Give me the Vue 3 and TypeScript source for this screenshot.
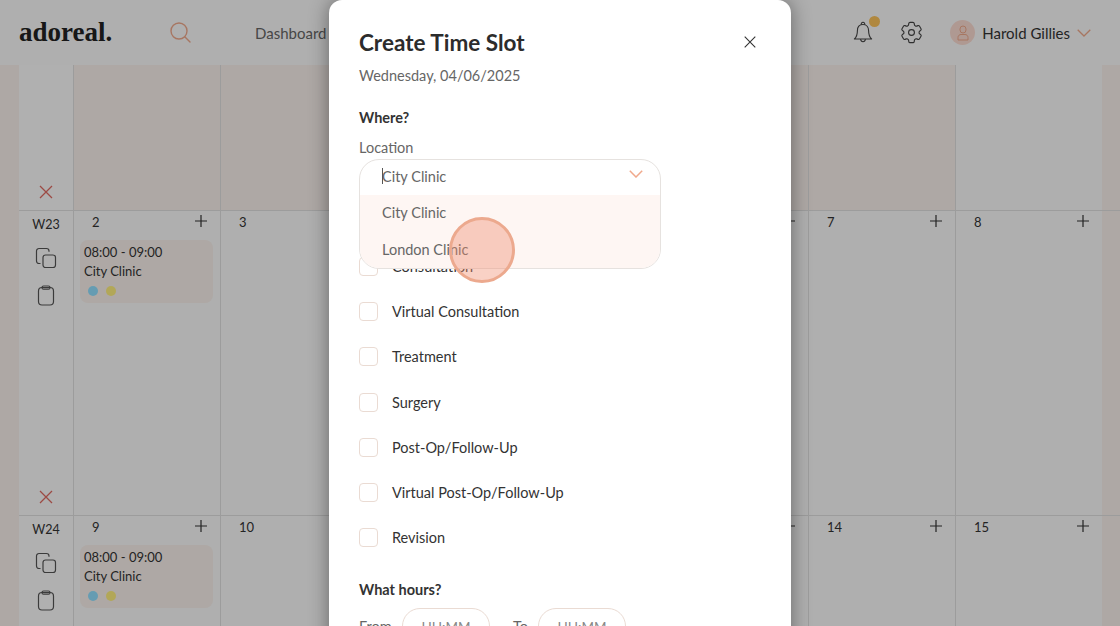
<script setup lang="ts">
const weeks = [
  { label: 'W22', days: [] as number[] },
  { label: 'W23', days: [2, 3, 4, 5, 6, 7, 8] },
  { label: 'W24', days: [9, 10, 11, 12, 13, 14, 15] },
]

// first row belongs to the previous month mostly, only the last day is active
const mutedTopRow = [true, true, true, true, true, true, false]

const slotTypes = [
  'Consultation',
  'Virtual Consultation',
  'Treatment',
  'Surgery',
  'Post-Op/Follow-Up',
  'Virtual Post-Op/Follow-Up',
  'Revision',
]
</script>

<template>
  <div class="page">
    <header class="topbar">
      <div class="logo">adoreal.</div>
      <svg class="search" width="24" height="24" viewBox="0 0 24 24" fill="none" stroke="#f0a98c" stroke-width="1.4">
        <circle cx="11" cy="11" r="8" />
        <path d="M17 17l5 5" stroke-linecap="round" />
      </svg>
      <nav class="nav">Dashboard</nav>
      <div class="actions">
        <div class="bell">
          <svg width="24" height="26" viewBox="0 0 24 26" fill="none" stroke="#444" stroke-width="1.1" stroke-linejoin="round">
            <path d="M12 4.500c-3.600 0-5.600 2.700-5.600 6.200 0 4.300-1 6.400-3 8.300h17.200c-2-1.900-3-4-3-8.300 0-3.500-2-6.200-5.600-6.200z" />
            <path d="M10.300 4.800c-.3-1.500.5-2.500 1.700-2.500s2 1 1.700 2.500" />
            <path d="M9.500 19.200c.3 1.700 1.300 2.600 2.500 2.600s2.200-.9 2.500-2.600" />
          </svg>
          <span class="bell-dot"></span>
        </div>
        <svg class="gear" width="27" height="27" viewBox="0 0 24 24" fill="none" stroke="#444" stroke-width="1">
          <path d="M9.594 3.94c.09-.542.56-.94 1.11-.94h2.593c.55 0 1.02.398 1.11.94l.213 1.281c.063.374.313.686.645.87.074.04.147.083.22.127.325.196.72.257 1.075.124l1.217-.456a1.125 1.125 0 0 1 1.37.49l1.296 2.247a1.125 1.125 0 0 1-.26 1.431l-1.003.827c-.293.241-.438.613-.43.992a7.723 7.723 0 0 1 0 .255c-.008.378.137.75.43.991l1.004.827c.424.35.534.955.26 1.43l-1.298 2.247a1.125 1.125 0 0 1-1.369.491l-1.217-.456c-.355-.133-.75-.072-1.076.124a6.47 6.47 0 0 1-.22.128c-.331.183-.581.495-.644.869l-.213 1.281c-.09.543-.56.94-1.11.94h-2.594c-.55 0-1.019-.398-1.11-.94l-.213-1.281c-.062-.374-.312-.686-.644-.87a6.52 6.52 0 0 1-.22-.127c-.325-.196-.72-.257-1.076-.124l-1.217.456a1.125 1.125 0 0 1-1.369-.49l-1.297-2.247a1.125 1.125 0 0 1 .26-1.431l1.004-.827c.292-.24.437-.613.43-.991a6.932 6.932 0 0 1 0-.255c.007-.38-.138-.751-.43-.992l-1.004-.827a1.125 1.125 0 0 1-.26-1.43l1.297-2.247a1.125 1.125 0 0 1 1.37-.491l1.216.456c.356.133.751.072 1.076-.124.072-.044.146-.086.22-.128.332-.183.582-.495.644-.869l.214-1.28Z" />
          <circle cx="12" cy="12" r="2.600" />
        </svg>
        <div class="avatar">
          <svg width="14" height="16" viewBox="0 0 14 16" fill="none" stroke="#f0a98c" stroke-width="1">
            <rect x="4" y="1" width="6" height="7" rx="3" />
            <path d="M2 15v-2.500C2 10.500 3.500 9.500 5 9.500h4c1.500 0 3 1 3 3V15z" stroke-linejoin="round" />
          </svg>
        </div>
        <span class="user">Harold Gillies</span>
        <svg width="14" height="8" viewBox="0 0 14 8" fill="none" stroke="#f0a98c" stroke-width="1.3">
          <path d="M.7.7L7 7l6.300-6.300" />
        </svg>
      </div>
    </header>

    <div class="calendar">
      <div v-for="(week, w) in weeks" :key="week.label" class="week" :class="{ first: w === 0 }">
        <div class="week-side">
          <template v-if="week.days.length">
            <span class="week-label">{{ week.label }}</span>
            <svg class="side-icon copy" width="22" height="22" viewBox="0 0 22 22" fill="none" stroke="#555" stroke-width="1.2">
              <rect x="8" y="8" width="12.500" height="12.500" rx="2.500" />
              <path d="M5.500 16.500H4a2.500 2.500 0 0 1-2.500-2.500V4A2.500 2.500 0 0 1 4 1.500h7.500A2.500 2.500 0 0 1 14 4v.8" />
            </svg>
            <svg class="side-icon" width="18" height="21" viewBox="0 0 18 21" fill="none" stroke="#555" stroke-width="1.2">
              <rect x="1.500" y="2.500" width="15" height="17.500" rx="3.500" />
              <rect x="5" y="1" width="8" height="3.200" rx="1.500" />
            </svg>
          </template>
          <svg class="remove" width="14" height="14" viewBox="0 0 14 14" stroke="#e06a62" stroke-width="1.3">
            <path d="M1 1l12 12M13 1L1 13" />
          </svg>
        </div>
        <div
          v-for="(day, i) in 7"
          :key="day"
          class="cell"
          :class="{ muted: w === 0 && mutedTopRow[i] }"
        >
          <template v-if="week.days.length">
            <div class="cell-head">
              <span class="day-num">{{ week.days[i] }}</span>
              <svg width="14" height="14" viewBox="0 0 14 14" stroke="#333" stroke-width="1.2">
                <path d="M7 1v12M1 7h12" />
              </svg>
            </div>
            <div v-if="i === 0" class="slot">
              <div>08:00 - 09:00</div>
              <div>City Clinic</div>
              <div class="dots"><i class="blue"></i><i class="yellow"></i></div>
            </div>
          </template>
        </div>
      </div>
    </div>

    <div class="backdrop"></div>

    <div class="modal">
      <div class="modal-head">
        <h1>Create Time Slot</h1>
        <svg width="12" height="12" viewBox="0 0 12 12" stroke="#333" stroke-width="1.1">
          <path d="M.7.700l10.600 10.600M11.300.700L.7 11.300" />
        </svg>
      </div>
      <p class="date">Wednesday, 04/06/2025</p>

      <h2 class="where">Where?</h2>
      <label class="field-label">Location</label>
      <div class="select-wrap">
        <div class="select">
          <div class="select-value">
            <span class="caret"></span>City Clinic
            <svg class="chevron" width="14" height="8" viewBox="0 0 14 8" fill="none" stroke="#f0a98c" stroke-width="1.5">
              <path d="M.8.800L7 7l6.200-6.200" />
            </svg>
          </div>
          <div class="option">City Clinic</div>
          <div class="option">London Clinic</div>
        </div>
      </div>

      <ul class="types">
        <li v-for="t in slotTypes" :key="t" class="type-row"><span class="box"></span>{{ t }}</li>
      </ul>

      <h2 class="hours">What hours?</h2>
      <div class="time-row">
        <span class="from">From</span>
        <span class="pill">HH:MM</span>
        <span class="to">To</span>
        <span class="pill">HH:MM</span>
      </div>
    </div>

    <div class="click-dot"></div>
  </div>
</template>

<style scoped>
.page {
  position: relative;
  width: 1120px;
  height: 626px;
  overflow: hidden;
  background: #f9f1ec;
  font-family: Lato, 'Liberation Sans', sans-serif;
  color: #333;
}

.topbar {
  display: flex;
  align-items: center;
  height: 65px;
  padding: 0 29px 0 19px;
  background: #fbfbfb;
  box-sizing: border-box;
}

.logo {
  width: 149px;
  font-family: 'Liberation Serif', serif;
  font-weight: 700;
  font-size: 27px;
  color: #222;
}

.search {
  flex: none;
  margin-bottom: 2px;
}

.nav {
  margin-left: 63px;
  font-size: 15px;
  color: #666;
}

.actions {
  display: flex;
  align-items: center;
  margin-left: auto;
}

.bell {
  position: relative;
  display: flex;
}

.bell-dot {
  position: absolute;
  top: -4px;
  right: -5px;
  width: 11px;
  height: 11px;
  border-radius: 50%;
  background: #fcc35b;
}

.gear {
  margin-left: 23px;
}

.avatar {
  display: flex;
  align-items: center;
  justify-content: center;
  width: 25px;
  height: 25px;
  margin-left: 25px;
  border-radius: 50%;
  background: #fbdcd2;
}

.user {
  margin: 0 7px;
  font-size: 15px;
}

.calendar {
  display: flex;
  flex-direction: column;
  margin-left: 19px;
}

.week {
  display: grid;
  grid-template-columns: 54px repeat(7, 147px);
  height: 305px;
  border-top: 1px solid #e0e0e0;
  box-sizing: border-box;
}

.week.first {
  height: 145px;
  border-top: none;
}

.week-side {
  position: relative;
  display: flex;
  flex-direction: column;
  align-items: center;
  background: #fdfdfd;
}

.week-label {
  margin-top: 6px;
  font-size: 12.5px;
  line-height: 15px;
}

.side-icon {
  margin-top: 16px;
}

.side-icon.copy {
  margin-top: 15px;
}

.remove {
  position: absolute;
  bottom: 11px;
  left: 20px;
}

.cell {
  background: #fbfbfb;
  border-left: 1px solid #e0e0e0;
  box-sizing: border-box;
}

.cell.muted {
  background: #f9f1ec;
}

.cell-head {
  display: flex;
  align-items: center;
  justify-content: space-between;
  padding: 0 12px 0 18px;
  height: 20px;
  box-sizing: border-box;
}

.day-num {
  padding-top: 2px;
  font-size: 13px;
}

.slot {
  margin: 9px 7px 0 6px;
  height: 63px;
  padding: 3px 4px;
  background: #f9f1ec;
  border-radius: 8px;
  font-size: 13px;
  line-height: 19px;
  box-sizing: border-box;
}

.dots {
  display: flex;
  gap: 8px;
  padding: 5px 0 0 4px;
}

.dots i {
  width: 10px;
  height: 10px;
  border-radius: 50%;
}

.blue {
  background: #92e0ff;
}

.yellow {
  background: #fff07f;
}

.backdrop {
  position: absolute;
  inset: 0;
  background: rgba(0, 0, 0, 0.3);
}

.modal {
  position: absolute;
  top: 0;
  left: 329px;
  width: 462px;
  height: 720px;
  padding: 28px 30px 0;
  background: #fff;
  border-radius: 13px;
  box-shadow: 0 0 20px rgba(0, 0, 0, 0.42);
  box-sizing: border-box;
}

.modal-head {
  display: flex;
  align-items: flex-start;
  justify-content: space-between;
  padding-right: 5px;
}

.modal-head svg {
  margin-top: 8px;
}

h1 {
  margin: 0;
  font-size: 22.5px;
  line-height: 29px;
  font-weight: 700;
  color: #2c2c2c;
}

.date {
  margin: 9px 0 0;
  font-size: 14.5px;
  line-height: 20px;
  color: #666;
}

h2 {
  margin: 0;
  font-size: 14.5px;
  font-weight: 700;
  line-height: 20px;
  color: #333;
}

.where {
  margin-top: 22px;
}

.field-label {
  display: block;
  margin-top: 10px;
  font-size: 14.5px;
  line-height: 20px;
  color: #666;
}

.select-wrap {
  position: relative;
  height: 85px;
  margin-top: 1px;
}

.select {
  position: absolute;
  top: 0;
  left: 0;
  width: 302px;
  height: 110px;
  background: #fff;
  border: 1px solid #e6e2df;
  border-radius: 20px;
  overflow: hidden;
  box-sizing: border-box;
  z-index: 2;
  font-size: 14.5px;
  color: #666;
}

.select-value {
  position: relative;
  height: 35px;
  padding: 6px 22px;
  line-height: 22px;
  box-sizing: border-box;
}

.caret {
  position: absolute;
  top: 8px;
  left: 22px;
  width: 1px;
  height: 16px;
  background: #555;
}

.chevron {
  position: absolute;
  top: 10px;
  right: 17px;
}

.option {
  height: 37px;
  padding: 0 22px;
  line-height: 35px;
  background: #fef6f3;
}

.types {
  list-style: none;
  margin: 0;
  padding: 0;
}

.type-row {
  display: flex;
  align-items: center;
  height: 45.2px;
  font-size: 14.5px;
  color: #333;
}

.box {
  width: 19px;
  height: 19px;
  margin-right: 14px;
  border: 1px solid #eadbd3;
  border-radius: 4px;
  box-sizing: border-box;
}

.hours {
  margin-top: 20px;
}

.time-row {
  display: flex;
  align-items: flex-start;
  margin-top: 8px;
  font-size: 14.5px;
  color: #666;
}

.from {
  width: 43px;
  padding-top: 10px;
}

.pill {
  width: 88px;
  height: 36px;
  line-height: 36px;
  border: 1px solid #eadbd3;
  border-radius: 18px;
  text-align: center;
  box-sizing: border-box;
  font-size: 13.5px;
  color: #888;
}

.to {
  width: 25px;
  margin-left: 23px;
  padding-top: 10px;
}

.click-dot {
  position: absolute;
  top: 217px;
  left: 449px;
  width: 66px;
  height: 66px;
  border: 3px solid #eca98e;
  border-radius: 50%;
  background: rgba(240, 140, 110, 0.4);
  box-sizing: border-box;
  z-index: 3;
}
</style>
